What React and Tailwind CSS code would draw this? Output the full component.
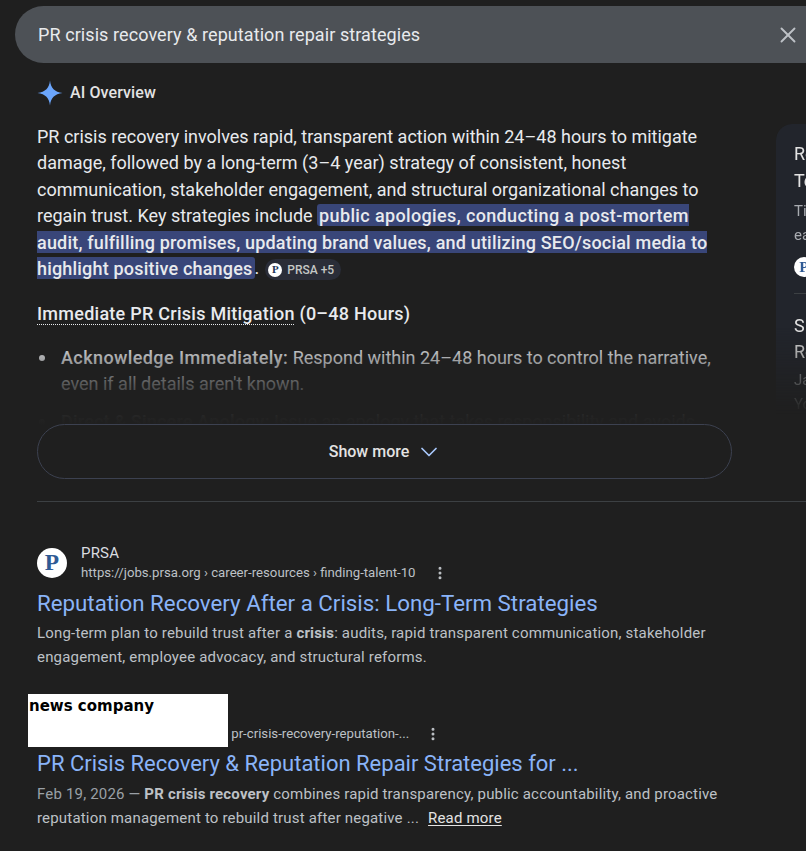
import { X, ChevronDown, EllipsisVertical } from 'lucide-react'

function PrsaLogo({ size = 30, color = 'text-[#2f5a94]' }) {
  return (
    <span
      className={`flex shrink-0 items-center justify-center rounded-full bg-white font-bold ${color}`}
      style={{ width: size, height: size, fontSize: size * 0.78, lineHeight: 1, fontFamily: '"Liberation Serif", serif' }}
    >
      P
    </span>
  )
}

function Sparkle() {
  return (
    <svg width="26" height="26" viewBox="0 0 26 26" className="shrink-0">
      <path d="M13 0.5C13.8 8 17.5 12 25.5 13C17.5 14 13.8 18 13 25.5C12.2 18 8.5 14 0.5 13C8.5 12 12.2 8 13 0.5Z" fill="#6ba5fb" />
    </svg>
  )
}

function SidePanel() {
  return (
    <div className="h-[290px] w-[30px] shrink-0 overflow-hidden rounded-tl-2xl bg-[#22252c] pl-[18px] pt-[16px] [mask-image:linear-gradient(to_bottom,black_70%,transparent_100%)]">
      <div className="w-[300px]">
        <p className="text-lg leading-[27px] text-[#e3e3e3]">Reputation</p>
        <p className="text-lg leading-[27px] text-[#e3e3e3]">Tech</p>
        <p className="mt-[5px] text-[15px] leading-6 text-[#a8abb0]">Time</p>
        <p className="text-[15px] leading-6 text-[#a8abb0]">each</p>
        <div className="mt-[10px]"><PrsaLogo size={20} /></div>
        <div className="mt-[16px] h-px bg-[#3c4043]" />
        <p className="mt-[19px] text-lg leading-[26px] text-[#e3e3e3]">Six</p>
        <p className="text-lg leading-[26px] text-[#e3e3e3]">Rep</p>
        <p className="mt-[3px] text-[15px] leading-6 text-[#a8abb0]">Jan</p>
        <p className="text-[15px] leading-6 text-[#a8abb0]">You</p>
      </div>
    </div>
  )
}

function Result({ logo, name, url, menuGap, title, titleClass, snippetClass, children }) {
  return (
    <div>
      <div className="flex h-[43px] items-center gap-[14px]">
        {logo}
        <div>
          <p className="text-[15px] leading-5 tracking-[0.18px] text-[#dadce0]">{name}</p>
          <div className="flex items-center text-[13.2px] leading-[19px] text-[#bdc1c6]">
            <span className="whitespace-nowrap">{url}</span>
            <EllipsisVertical size={16} strokeWidth={2.5} className="text-[#bdc1c6]" style={{ marginLeft: menuGap }} />
          </div>
        </div>
      </div>
      <h3 className={`whitespace-nowrap leading-[30px] text-[#8ab4f8] ${titleClass}`}>{title}</h3>
      <p className={`whitespace-nowrap text-[15px] leading-6 tracking-[0.18px] text-[#bdc1c6] ${snippetClass}`}>{children}</p>
    </div>
  )
}

export default function App() {
  return (
    <div className="relative h-[851px] w-[806px] overflow-hidden bg-[#1f1f1f] pt-[6px] font-['Roboto',sans-serif]">
      <div className="ml-[15px] flex h-[57px] items-center justify-between rounded-l-full bg-[#4d5156] pl-[23px] pr-[5px]">
        <span className="text-lg tracking-[0.08px] text-[#e8eaed]">PR crisis recovery &amp; reputation repair strategies</span>
        <X size={26} strokeWidth={1.75} className="text-[#bdc1c6]" />
      </div>

      <div className="relative flex items-start justify-between pl-[37px]">
        <div className="w-[695px]">
          <div className="flex items-center gap-[7px] pt-[17px]">
            <Sparkle />
            <span className="text-base font-medium tracking-[0.1px] text-[#e3e3e3]">AI Overview</span>
          </div>

          <div className="relative mt-[18px] h-[302px] overflow-hidden">
            <p className="whitespace-nowrap text-lg leading-[26.3px] text-[#e8eaed]">
              PR crisis recovery involves rapid, transparent action within 24–48 hours to mitigate
              <br />
              damage, followed by a long-term (3–4 year) strategy of consistent, honest
              <br />
              communication, stakeholder engagement, and structural organizational changes to
              <br />
              regain trust. Key strategies include{' '}
              <mark className="rounded-[3px] bg-[#394679] px-[2px] py-[0.5px] font-medium tracking-[0.19px] text-[#e8eaed]">
                <span className="tracking-[0.36px]">public apologies, conducting a post-mortem</span>
                <br />
                audit, fulfilling promises, updating brand values, and utilizing SEO/social media to
                <br />
                highlight positive changes
              </mark>
              .
              <span className="ml-[6px] inline-flex h-[21px] items-center gap-[5px] rounded-full bg-[#2a2d38] pl-[3px] pr-[7px] align-[1px] text-xs font-medium text-[#c4c7c5]">
                <PrsaLogo size={14} color="text-[#1d3557]" />
                PRSA +5
              </span>
            </p>

            <h2 className="mt-[19px] text-lg font-medium leading-[26px] tracking-[0.26px] text-[#e8eaed]">
              <span className="underline decoration-dotted decoration-1 underline-offset-[4px]">Immediate PR Crisis Mitigation</span> (0–48 Hours)
            </h2>

            <ul className="mt-[18px] whitespace-nowrap text-lg leading-[26px] text-[#e8eaed]">
              <li className="flex">
                <span className="ml-[2px] mr-[16px] mt-[10px] size-[6px] shrink-0 rounded-full bg-[#e8eaed]" />
                <div>
                  <strong className="font-medium tracking-[0.41px]">Acknowledge Immediately:</strong> Respond within 24–48 hours to control the narrative,
                  <br />
                  even if all details aren't known.
                </div>
              </li>
              <li className="mt-[12px] flex">
                <span className="ml-[2px] mr-[16px] mt-[10px] size-[6px] shrink-0 rounded-full bg-[#e8eaed]" />
                <div>
                  <strong className="font-medium tracking-[0.2px]">Direct &amp; Sincere Apology:</strong> Issue an apology that takes responsibility and avoids
                </div>
              </li>
            </ul>

            <div className="absolute inset-x-0 bottom-0 h-[82px] bg-[linear-gradient(to_bottom,#1f1f1f1a_0%,#1f1f1fba_50%,#1f1f1ffa_90%,#1f1f1f_100%)]" />
          </div>

          <button className="relative -mt-[2px] flex h-[55px] w-full items-center justify-center gap-[6px] rounded-full border border-[#3c4150] bg-[#1f1f1f] text-base font-medium text-[#e3e3e3]">
            Show more
            <ChevronDown size={28} strokeWidth={1.5} className="-mr-[3px] text-[#a8c7fa]" />
          </button>

          <div className="mt-[22px] h-px w-[769px] bg-[#3c4043]" />

          <div className="mt-[39px]">
            <Result
              logo={<PrsaLogo />}
              name="PRSA"
              url="https://jobs.prsa.org › career-resources › finding-talent-10"
              menuGap="16px"
              title="Reputation Recovery After a Crisis: Long-Term Strategies"
              titleClass="mt-[4px] text-[22.3px]"
              snippetClass="mt-[3px]"
            >
              Long-term plan to rebuild trust after a <b className="font-bold">crisis</b>: audits, rapid transparent communication, stakeholder
              <br />
              engagement, employee advocacy, and structural reforms.
            </Result>
          </div>

          <div className="mt-[33px]">
            <Result
              logo={<PrsaLogo />}
              name="news company"
              url="https://news.com › post › pr-crisis-recovery-reputation-..."
              menuGap="16px"
              title="PR Crisis Recovery & Reputation Repair Strategies for ..."
              titleClass="mt-[4px] text-[22px]"
              snippetClass="mt-[3px]"
            >
              <span className="text-[#9aa0a6]">Feb 19, 2026 — </span>
              <b className="font-bold">PR crisis recovery</b> combines rapid transparency, public accountability, and proactive
              <br />
              reputation management to rebuild trust after negative ...
              <span className="ml-[9px] text-[#e3e3e3] underline underline-offset-2">Read more</span>
            </Result>
          </div>
        </div>

        <div className="mt-[61px]">
          <SidePanel />
        </div>
      </div>

      <div className="absolute left-[28px] top-[694px] h-[53px] w-[200px] bg-white pl-px font-['DejaVu_Sans',sans-serif] text-[15px] font-bold leading-[24px] text-black">
        news company
      </div>
    </div>
  )
}
